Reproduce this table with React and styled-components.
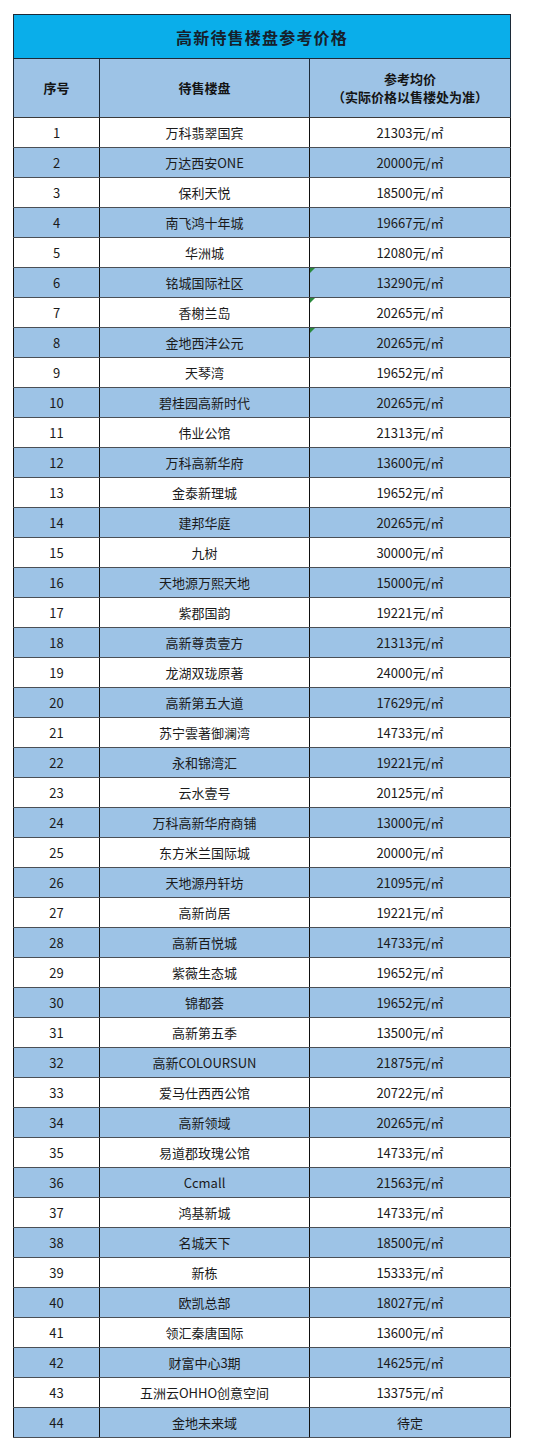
import React from "react";
import styled, { createGlobalStyle } from "styled-components";

const Global = createGlobalStyle`
  html, body { margin: 0; padding: 0; background: #ffffff; }
  body { font-family: "Noto Sans CJK SC", "Noto Sans", sans-serif; color: #1a1a1a; }
`;

const Page = styled.div`
  padding: 14px 0 0 13px;
  width: 550px;
  box-sizing: border-box;
`;

const Table = styled.table`
  width: 497px;
  border-collapse: collapse;
  table-layout: fixed;
  border: 1px solid #1c2a38;
`;

const TitleCell = styled.th`
  height: 43px;
  padding: 0;
  background: #0aaeea;
  font-family: "Noto Sans CJK SC", serif;
  font-weight: 700;
  font-size: 16px;
  letter-spacing: 1.2px;
  color: #16202b;
  border: 1px solid #1c2a38;
`;

const HeadCell = styled.th`
  height: 58px;
  padding: 0;
  background: #9dc3e6;
  font-weight: 700;
  font-size: 13px;
  line-height: 18px;
  color: #141414;
  border: 1px solid #1c2a38;
  border-bottom-color: #3a3a3a;
`;

const Row = styled.tr`
  background: ${(p) => (p.$alt ? "#9dc3e6" : "#ffffff")};
`;

const Cell = styled.td`
  position: relative;
  height: 29px;
  padding: 0;
  text-align: center;
  font-size: 13px;
  color: #1a1a1a;
  border-top: 1px solid #4a4f55;
  border-bottom: 1px solid #4a4f55;
  border-left: 1px solid #111;
  border-right: 1px solid #111;
`;

const Mark = styled.span`
  position: absolute;
  left: 0;
  top: 0;
  width: 0;
  height: 0;
  border-top: 5px solid #2a8a3c;
  border-right: 5px solid transparent;
`;

const rows = [
  ["万科翡翠国宾", "21303"],
  ["万达西安ONE", "20000"],
  ["保利天悦", "18500"],
  ["南飞鸿十年城", "19667"],
  ["华洲城", "12080"],
  ["铭城国际社区", "13290"],
  ["香榭兰岛", "20265"],
  ["金地西沣公元", "20265"],
  ["天琴湾", "19652"],
  ["碧桂园高新时代", "20265"],
  ["伟业公馆", "21313"],
  ["万科高新华府", "13600"],
  ["金泰新理城", "19652"],
  ["建邦华庭", "20265"],
  ["九树", "30000"],
  ["天地源万熙天地", "15000"],
  ["紫郡国韵", "19221"],
  ["高新尊贵壹方", "21313"],
  ["龙湖双珑原著", "24000"],
  ["高新第五大道", "17629"],
  ["苏宁雲著御澜湾", "14733"],
  ["永和锦湾汇", "19221"],
  ["云水壹号", "20125"],
  ["万科高新华府商铺", "13000"],
  ["东方米兰国际城", "20000"],
  ["天地源丹轩坊", "21095"],
  ["高新尚居", "19221"],
  ["高新百悦城", "14733"],
  ["紫薇生态城", "19652"],
  ["锦都荟", "19652"],
  ["高新第五季", "13500"],
  ["高新COLOURSUN", "21875"],
  ["爱马仕西西公馆", "20722"],
  ["高新领域", "20265"],
  ["易道郡玫瑰公馆", "14733"],
  ["Ccmall", "21563"],
  ["鸿基新城", "14733"],
  ["名城天下", "18500"],
  ["新栋", "15333"],
  ["欧凯总部", "18027"],
  ["领汇秦唐国际", "13600"],
  ["财富中心3期", "14625"],
  ["五洲云OHHO创意空间", "13375"],
  ["金地未来域", null],
];

export default function App() {
  return (
    <Page>
      <Global />
      <Table>
        <colgroup>
          <col style={{ width: 86 }} />
          <col style={{ width: 210 }} />
          <col style={{ width: 201 }} />
        </colgroup>
        <thead>
          <tr>
            <TitleCell colSpan={3}>高新待售楼盘参考价格</TitleCell>
          </tr>
          <tr>
            <HeadCell>序号</HeadCell>
            <HeadCell>待售楼盘</HeadCell>
            <HeadCell>
              参考均价
              <br />
              （实际价格以售楼处为准）
            </HeadCell>
          </tr>
        </thead>
        <tbody>
          {rows.map(([name, price], i) => (
            <Row key={i} $alt={i % 2 === 1}>
              <Cell>{i + 1}</Cell>
              <Cell>{name}</Cell>
              <Cell>
                {i >= 5 && i <= 7 && <Mark />}
                {price ? `${price}元/㎡` : "待定"}
              </Cell>
            </Row>
          ))}
        </tbody>
      </Table>
    </Page>
  );
}
